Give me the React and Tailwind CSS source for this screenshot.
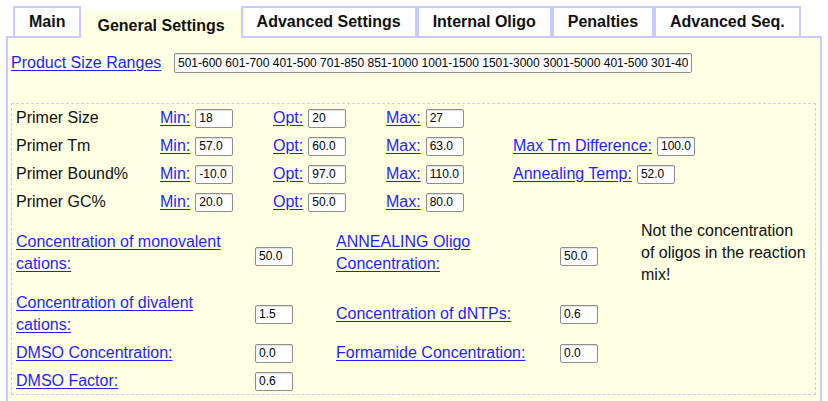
const tabs = ['Main', 'General Settings', 'Advanced Settings', 'Internal Oligo', 'Penalties', 'Advanced Seq.'];

const primerRows = [
  { label: 'Primer Size', min: '18', opt: '20', max: '27' },
  { label: 'Primer Tm', min: '57.0', opt: '60.0', max: '63.0', extra: ['Max Tm Difference:', '100.0'] },
  { label: 'Primer Bound%', min: '-10.0', opt: '97.0', max: '110.0', extra: ['Annealing Temp:', '52.0'] },
  { label: 'Primer GC%', min: '20.0', opt: '50.0', max: '80.0' },
];

function Field({ value, className = 'w-[38px]' }) {
  return (
    <input
      type="text"
      defaultValue={value}
      className={`h-[19px] ${className} rounded-[2px] border border-[#8e8e8e] bg-white px-[3px] text-[12px] leading-none text-black shadow-[inset_0_1px_1px_rgba(0,0,0,0.12)] outline-none`}
    />
  );
}

function Lnk({ children }) {
  return (
    <a href="#" className="text-[#1f1fff] underline underline-offset-[2px]">
      {children}
    </a>
  );
}

function Tab({ name, active }) {
  if (active) {
    return (
      <div className="relative z-10 -mb-[2px] flex h-[27px] items-center border-2 border-transparent bg-[#ffffe4] px-[14px] pt-[2px] text-[16px] font-bold">
        {name}
      </div>
    );
  }
  return (
    <div className="flex h-[30px] items-center border-2 border-b-0 border-[#c9c9ff] bg-white px-[14px] pb-[1px] text-[16px] font-bold">
      {name}
    </div>
  );
}

function MinOptMax({ name, value }) {
  return (
    <div className="flex items-center gap-[5px]">
      <Lnk>{name}</Lnk>
      <Field value={value} />
    </div>
  );
}

export default function App() {
  return (
    <div className="min-h-[401px] w-[828px] overflow-hidden bg-white pt-[6px] pl-[6px] font-['Liberation_Sans',Arial,sans-serif] text-[16px] text-[#111]">
      <div className="flex items-end pl-[7px]">
        {tabs.map((t) => (
          <Tab key={t} name={t} active={t === 'General Settings'} />
        ))}
      </div>

      <div className="w-[816px] border-2 border-[#c9c9ff] bg-[#ffffe4] pb-[20px]">
        <div className="flex h-[20px] items-center pl-[3px] mt-[15px]">
          <div className="w-[163px]">
            <Lnk>Product Size Ranges</Lnk>
          </div>
          <Field
            value="501-600 601-700 401-500 701-850 851-1000 1001-1500 1501-3000 3001-5000 401-500 301-400 201-300 101-200"
            className="w-[518px] h-[20px]"
          />
        </div>

        <div className="mt-[30px] ml-[3px] mr-[4px] border border-dashed border-[#c9c9ff] px-[4px] pt-[2px] pb-[2px]">
          <div className="grid grid-cols-[144px_113px_113px_127px_1fr] auto-rows-[24px] items-center gap-y-[4px]">
            {primerRows.map((r) => (
              <div key={r.label} className="contents">
                <span>{r.label}</span>
                <MinOptMax name="Min:" value={r.min} />
                <MinOptMax name="Opt:" value={r.opt} />
                <MinOptMax name="Max:" value={r.max} />
                {r.extra ? <MinOptMax name={r.extra[0]} value={r.extra[1]} /> : <span />}
              </div>
            ))}
          </div>

          <div className="mt-[6px] grid grid-cols-[239px_81px_224px_81px_1fr] items-center gap-y-[6px] leading-[22px]">
            <Lnk>
              Concentration of monovalent
              <br />
              cations:
            </Lnk>
            <div className="pt-[4px]">
              <Field value="50.0" />
            </div>
            <Lnk>
              ANNEALING Oligo
              <br />
              Concentration:
            </Lnk>
            <div className="pt-[4px]">
              <Field value="50.0" />
            </div>
            <p>
              Not the concentration
              <br />
              of oligos in the reaction
              <br />
              mix!
            </p>

            <Lnk>
              Concentration of divalent
              <br />
              cations:
            </Lnk>
            <Field value="1.5" />
            <Lnk>Concentration of dNTPs:</Lnk>
            <Field value="0.6" />
            <span />

            <Lnk>DMSO Concentration:</Lnk>
            <Field value="0.0" />
            <Lnk>Formamide Concentration:</Lnk>
            <Field value="0.0" />
            <span />

            <Lnk>DMSO Factor:</Lnk>
            <Field value="0.6" />
            <span />
            <span />
            <span />
          </div>
        </div>
      </div>
    </div>
  );
}
